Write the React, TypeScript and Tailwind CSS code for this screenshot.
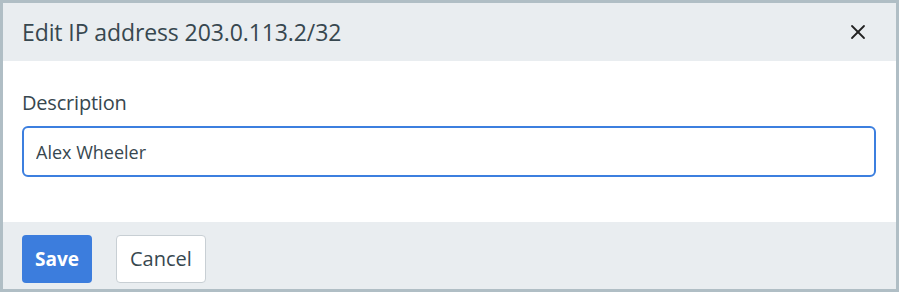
export default function App() {
  return (
    <div
      className="w-[899px] h-[292px] border-[3px] border-[#b0bec5] bg-white flex flex-col text-[#37474f]"
      style={{ fontFamily: '"Open Sans", "Noto Sans", sans-serif' }}
    >
      <div className="h-[58px] bg-[#e9edf0] flex items-center justify-between pl-[19px] pr-[30px]">
        <h2 className="text-[23px] tracking-[-0.1px]">Edit IP address 203.0.113.2/32</h2>
        <button className="text-[#222] flex items-center justify-center">
          <svg width="16" height="16" viewBox="0 0 16 16" fill="none" stroke="currentColor" strokeWidth="1.8" strokeLinecap="round">
            <line x1="2" y1="2" x2="14" y2="14" />
            <line x1="14" y1="2" x2="2" y2="14" />
          </svg>
        </button>
      </div>

      <div className="flex-1 bg-white px-[19px] pt-[29px]">
        <label className="block text-[20px] leading-[26px] mb-[10px] tracking-[-0.2px]">Description</label>
        <input
          defaultValue="Alex Wheeler"
          className="w-[854px] h-[51px] rounded-[6px] border-2 border-[#3c7fdf] px-[12px] text-[18px] text-[#37474f] outline-none"
        />
      </div>

      <div className="h-[67px] bg-[#e9edf0] flex items-start gap-[24px] pl-[19px] pt-[13px]">
        <button className="h-[48px] px-[13px] rounded-[4px] bg-[#3c7ddd] text-white font-bold text-[19px]">
          Save
        </button>
        <button className="h-[48px] px-[13px] rounded-[4px] bg-white border border-[#c8cfd4] text-[20px] text-[#37474f]">
          Cancel
        </button>
      </div>
    </div>
  );
}
